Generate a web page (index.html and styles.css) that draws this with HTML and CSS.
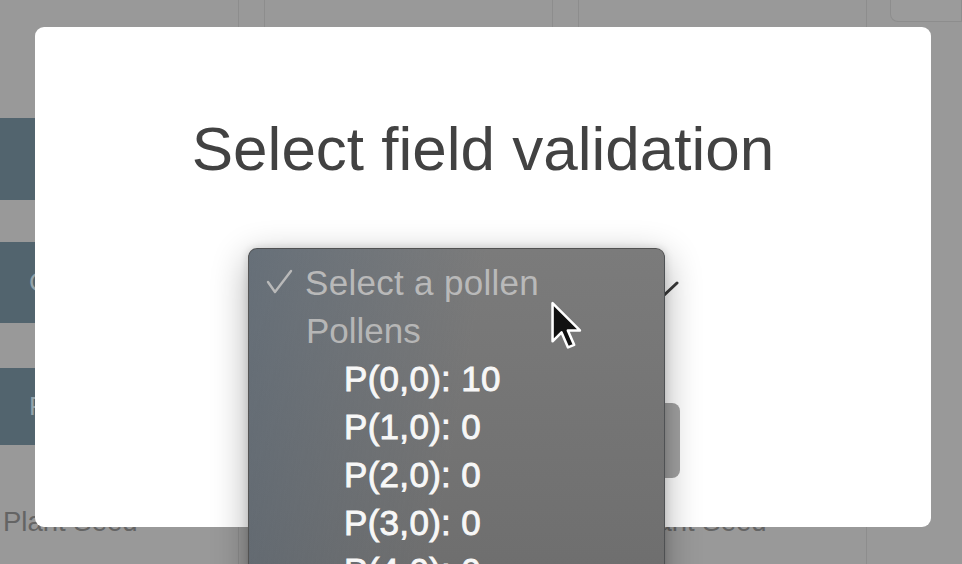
FILE: index.html
```html
<!DOCTYPE html>
<html lang="en">
<head>
<meta charset="utf-8">
<title>Select field validation</title>
<link rel="stylesheet" href="styles.css">
</head>
<body>
<div class="page">
  <div class="cell cell-first">
    <div class="side-buttons">
      <div class="side-btn side-btn-a">Add</div>
      <div class="side-btn side-btn-b">Create</div>
      <div class="side-btn side-btn-c">Fill</div>
    </div>
    <div class="cell-label">Plant Seed</div>
  </div>
  <div class="cell">
    <div class="cell-label cell-label-pad">Plant Seed</div>
  </div>
  <div class="cell">
    <div class="cell-label cell-label-pad">Plant Seed</div>
  </div>
  <div class="cell cell-last">
    <div class="mini-card"></div>
  </div>
</div>

<div class="modal">
  <h1 class="modal-title">Select field validation</h1>
  <div class="form">
    <div class="select-box">
      <svg class="chevron" width="36" height="20" viewBox="0 0 36 20"><polyline points="2,2 18,17 34,2" fill="none" stroke="#3a3a3a" stroke-width="3" stroke-linecap="round" stroke-linejoin="round"/></svg>
    </div>
    <div class="submit-btn"></div>
  </div>
</div>

<div class="menu">
  <div class="menu-row menu-row-disabled">
    <svg class="check" width="28" height="28" viewBox="0 0 28 28"><polyline points="3,14 10,24 26,3" fill="none" stroke="#b9b9b9" stroke-width="2.4" stroke-linecap="round" stroke-linejoin="round"/></svg>
    <span>Select a pollen</span>
  </div>
  <div class="menu-row menu-row-group">Pollens</div>
  <div class="menu-row menu-row-item">P(0,0): 10</div>
  <div class="menu-row menu-row-item">P(1,0): 0</div>
  <div class="menu-row menu-row-item">P(2,0): 0</div>
  <div class="menu-row menu-row-item">P(3,0): 0</div>
  <div class="menu-row menu-row-item">P(4,0): 0</div>
</div>

<svg class="cursor" width="34" height="52" viewBox="0 0 20 30">
  <path d="M1.5 1.5 L1.5 24 L6.8 18.8 L10.6 27.6 L14.2 26.1 L10.5 17.6 L17.6 17.6 Z" fill="#111" stroke="#fff" stroke-width="1.5" stroke-linejoin="round"/>
</svg>
</body>
</html>
```

FILE: styles.css
```css
html, body {
  margin: 0;
  padding: 0;
}

body {
  width: 962px;
  height: 564px;
  overflow: hidden;
  background: #999999;
  font-family: "Liberation Sans", Arial, Helvetica, sans-serif;
  position: relative;
}

.page {
  display: grid;
  grid-template-columns: 239px 289px 289px 1fr;
  column-gap: 25px;
  height: 564px;
}

.cell {
  border-left: 1px solid #8d8d8d;
  border-right: 1px solid #8d8d8d;
  display: flex;
  flex-direction: column;
  justify-content: flex-end;
}

.cell-first {
  border-left: none;
  justify-content: space-between;
  padding-top: 118px;
}

.cell-last {
  border: none;
  justify-content: flex-start;
}

.mini-card {
  height: 21px;
  margin-left: -2px;
  border: 1px solid #8d8d8d;
  border-top: none;
  border-bottom-left-radius: 8px;
  background: #9b9b9b;
}

.side-buttons {
  display: flex;
  flex-direction: column;
}

.side-btn {
  background: #52646e;
  color: #93a3ab;
  font-size: 26px;
  display: flex;
  align-items: center;
  justify-content: flex-start;
  padding-left: 29px;
  white-space: nowrap;
  overflow: hidden;
}

.side-btn-a { height: 82px; padding-left: 60px; }
.side-btn-b { height: 81px; margin-top: 42px; }
.side-btn-c { height: 77px; margin-top: 45px; }

.cell-label {
  font-size: 27.5px;
  line-height: 30px;
  color: #646464;
  padding: 0 0 27px 3px;
  white-space: nowrap;
}

.cell-label-pad {
  padding-left: 53px;
}

.modal {
  position: absolute;
  left: 35px;
  top: 27px;
  width: 896px;
  height: 500px;
  background: #ffffff;
  border-radius: 9px;
  display: flex;
  flex-direction: column;
}

.modal-title {
  margin: 0;
  padding-top: 91px;
  font-size: 62px;
  line-height: 62px;
  font-weight: normal;
  color: #424242;
  text-align: center;
}

.form {
  margin-left: 213px;
  width: 432px;
  display: flex;
  flex-direction: column;
}

.select-box {
  margin-top: 80px;
  height: 52px;
  display: flex;
  align-items: center;
  justify-content: flex-end;
}

.chevron {
  margin-right: 1px;
  margin-top: 9px;
}

.submit-btn {
  margin-top: 91px;
  height: 75px;
  background: #a2a2a2;
  border-radius: 8px;
}

.menu {
  position: absolute;
  left: 248px;
  top: 248px;
  width: 417px;
  height: 360px;
  box-sizing: border-box;
  padding-top: 10px;
  border-radius: 9px;
  border: 1px solid rgba(70, 70, 70, 0.7);
  background:
    linear-gradient(100deg, rgba(78, 98, 118, 0.45) 0%, rgba(78, 98, 118, 0) 50%),
    linear-gradient(180deg, #7b7b7b 0%, #6d6d6d 100%);
  box-shadow: 0 10px 36px rgba(0, 0, 0, 0.32), 0 0 8px rgba(0, 0, 0, 0.15);
  font-size: 35px;
  line-height: 48px;
  white-space: nowrap;
}

.menu-row {
  height: 48px;
  display: flex;
  align-items: center;
}

.menu-row-disabled {
  color: #b9b9b9;
  padding-left: 16px;
}

.menu-row-disabled span {
  letter-spacing: 0.3px;
}

.check {
  margin-right: 12px;
  margin-top: -3px;
}

.menu-row-group {
  color: #b6b6b6;
  padding-left: 57px;
}

.menu-row-item {
  color: #f7f7f7;
  padding-left: 95px;
  -webkit-text-stroke: 0.9px #f7f7f7;
  letter-spacing: 0.3px;
}

.cursor {
  position: absolute;
  left: 550px;
  top: 300px;
}
```
